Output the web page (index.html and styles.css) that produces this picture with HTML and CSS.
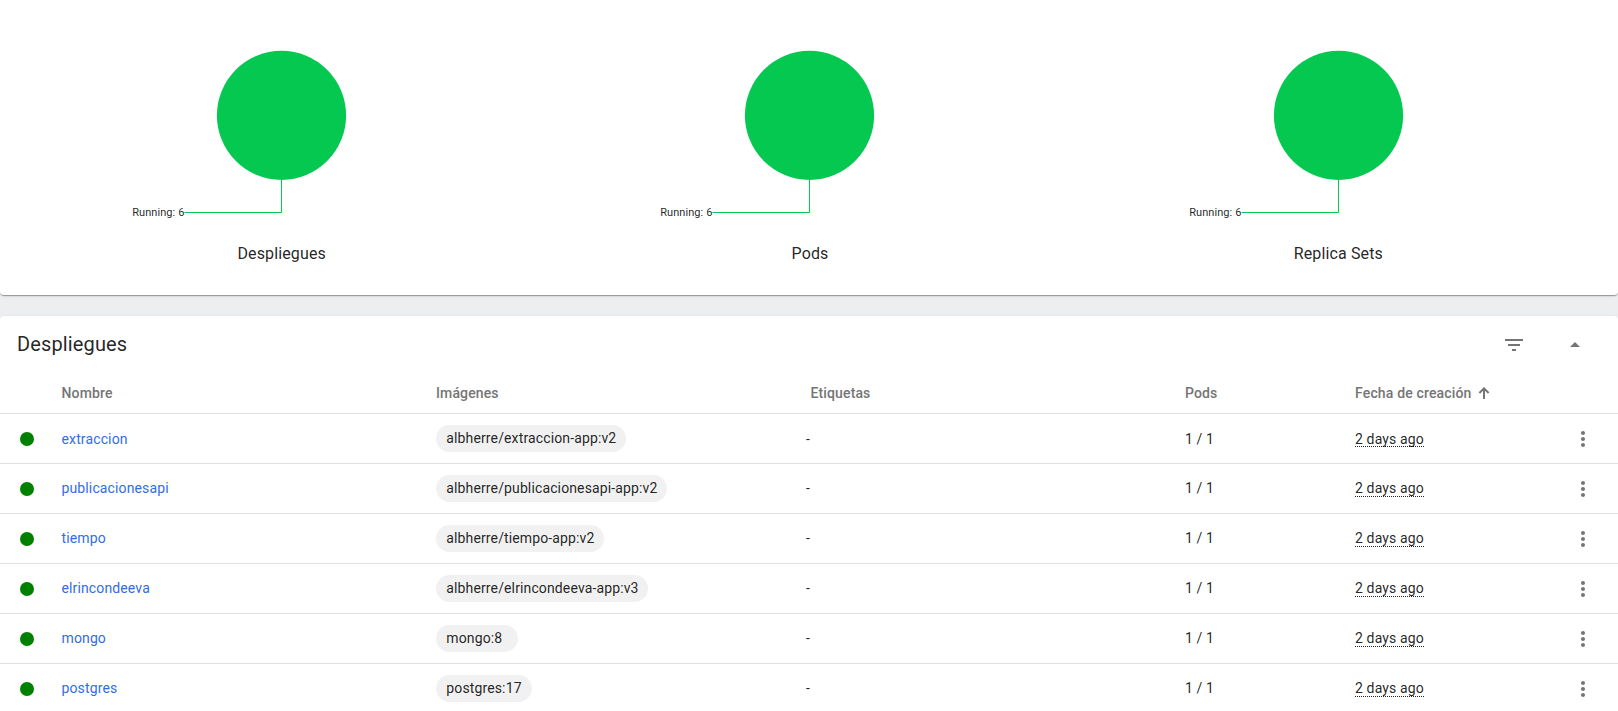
FILE: index.html
```
<!DOCTYPE html>
<html lang="es">
<head>
<meta charset="utf-8">
<title>Despliegues</title>
<link rel="stylesheet" href="styles.css">
</head>
<body>
<svg class="sprite" aria-hidden="true">
  <symbol id="more" viewBox="0 0 24 24"><path d="M12 8c1.1 0 2-.9 2-2s-.9-2-2-2-2 .9-2 2 .9 2 2 2zm0 2c-1.1 0-2 .9-2 2s.9 2 2 2 2-.9 2-2-.9-2-2-2zm0 6c-1.1 0-2 .9-2 2s.9 2 2 2 2-.9 2-2-.9-2-2-2z"/></symbol>
  <symbol id="chart" viewBox="0 0 300 230">
    <circle class="pie" cx="150.5" cy="115.4" r="64.6"/>
    <path class="leader" d="M150.5 179V212.5H53.5"/>
    <text class="label" x="53.4" y="216" text-anchor="end">Running: 6</text>
  </symbol>
</svg>
<section class="card status">
  <figure class="graph"><svg class="chart"><use href="#chart"/></svg><figcaption>Despliegues</figcaption></figure>
  <figure class="graph"><svg class="chart"><use href="#chart"/></svg><figcaption>Pods</figcaption></figure>
  <figure class="graph"><svg class="chart"><use href="#chart"/></svg><figcaption>Replica Sets</figcaption></figure>
</section>
<section class="card list">
  <header class="head">
    <h2>Despliegues</h2>
    <svg class="icon filter" viewBox="0 0 24 24"><path d="M10 18h4v-2h-4v2zM3 6v2h18V6H3zm3 7h12v-2H6v2z"/></svg>
    <svg class="icon collapse" viewBox="0 0 24 24"><path d="M7 14l5-5 5 5z"/></svg>
  </header>
  <div class="row titles">
    <span></span><span>Nombre</span><span>Imágenes</span><span class="tags-title">Etiquetas</span><span>Pods</span>
    <span class="sorted">Fecha de creación <svg class="arrow" viewBox="0 0 12 12"><path d="M6 12V1.5M1.4 6 6 1.4 10.6 6"/></svg></span><span></span>
  </div>
  <div class="row first"><i class="dot"></i><a class="cell">extraccion</a><span><b class="chip">albherre/extraccion-app:v2</b></span><span class="cell">-</span><span class="cell">1 / 1</span><span class="cell"><u>2 days ago</u></span><svg class="icon"><use href="#more"/></svg></div>
  <div class="row"><i class="dot"></i><a class="cell">publicacionesapi</a><span><b class="chip">albherre/publicacionesapi-app:v2</b></span><span class="cell">-</span><span class="cell">1 / 1</span><span class="cell"><u>2 days ago</u></span><svg class="icon"><use href="#more"/></svg></div>
  <div class="row"><i class="dot"></i><a class="cell">tiempo</a><span><b class="chip">albherre/tiempo-app:v2</b></span><span class="cell">-</span><span class="cell">1 / 1</span><span class="cell"><u>2 days ago</u></span><svg class="icon"><use href="#more"/></svg></div>
  <div class="row"><i class="dot"></i><a class="cell">elrincondeeva</a><span><b class="chip">albherre/elrincondeeva-app:v3</b></span><span class="cell">-</span><span class="cell">1 / 1</span><span class="cell"><u>2 days ago</u></span><svg class="icon"><use href="#more"/></svg></div>
  <div class="row"><i class="dot"></i><a class="cell">mongo</a><span><b class="chip">mongo:8</b></span><span class="cell">-</span><span class="cell">1 / 1</span><span class="cell"><u>2 days ago</u></span><svg class="icon"><use href="#more"/></svg></div>
  <div class="row last"><i class="dot"></i><a class="cell">postgres</a><span><b class="chip">postgres:17</b></span><span class="cell">-</span><span class="cell">1 / 1</span><span class="cell"><u>2 days ago</u></span><svg class="icon"><use href="#more"/></svg></div>
</section>
</body>
</html>
```
FILE: styles.css
```
* { box-sizing: border-box; }
body {
  margin: 0;
  background: #edeef0;
  color: rgba(0, 0, 0, .87);
  font: 14px/20px Roboto, sans-serif;
  letter-spacing: .13px;
}
.sprite { display: none; }
.card {
  background: #fff;
  border-radius: 4px;
  box-shadow: 0 2px 1px -1px rgba(0, 0, 0, .2), 0 1px 1px rgba(0, 0, 0, .14), 0 1px 3px rgba(0, 0, 0, .12);
}
.status {
  display: grid;
  grid-template-columns: repeat(3, 1fr);
  height: 295px;
  padding: 0 16px 0 17px;
  border-radius: 0 0 4px 4px;
}
.graph {
  display: flex;
  flex-direction: column;
  align-items: center;
  margin: 0;
}
.chart { width: 300px; height: 230px; }
.pie { fill: #04c850; }
.leader { fill: none; stroke: #04c850; }
.label { fill: rgba(0, 0, 0, .87); font-size: 11px; letter-spacing: .07px; }
figcaption { margin-top: 12px; padding-left: 1px; font-size: 16px; line-height: 24px; }
.list { margin-top: 21px; height: 395px; border-radius: 4px 4px 0 0; }
.head {
  display: flex;
  align-items: center;
  height: 57px;
  padding: 0 31.5px 0 17px;
}
h2 { flex: 1; margin: 0; padding-bottom: 2px; font-size: 20px; font-weight: 400; line-height: 24px; }
.icon { width: 24px; height: 24px; fill: #757575; }
.filter { margin-right: 37px; }
.row {
  display: grid;
  grid-template-columns: 44.5px 374.5px 370px 379px 170px 216px 24px;
  align-items: center;
  height: 50px;
  padding-left: 17px;
  border-bottom: 1px solid #e0e0e0;
}
.titles { height: 41px; color: #757575; font-weight: 500; }
.tags-title { padding-left: 4.5px; }
.sorted { display: flex; align-items: center; gap: 6.5px; letter-spacing: .16px; }
.arrow { width: 12px; height: 12px; fill: none; stroke: #757575; stroke-width: 2; }
.dot { width: 14px; height: 14px; margin-left: 3px; border-radius: 50%; background: #008000; }
a { color: #326de6; }
.cell { padding-bottom: 2px; }
.first .cell { padding-bottom: 0; }
.last { height: 48px; padding-top: 1px; border-bottom: 0; }
.chip {
  display: inline-block;
  min-width: 82px;
  padding: 0 9.9px 0 10.3px;
  border-radius: 14px;
  background: #f1f1f1;
  font-weight: 400;
  line-height: 27px;
}
u {
  display: inline-block;
  margin-bottom: -1px;
  padding-bottom: 1px;
  border-bottom: 1px dotted #222;
  line-height: 14px;
  text-decoration: none;
}
.first u { margin-bottom: 0; padding-bottom: 0; }
```
